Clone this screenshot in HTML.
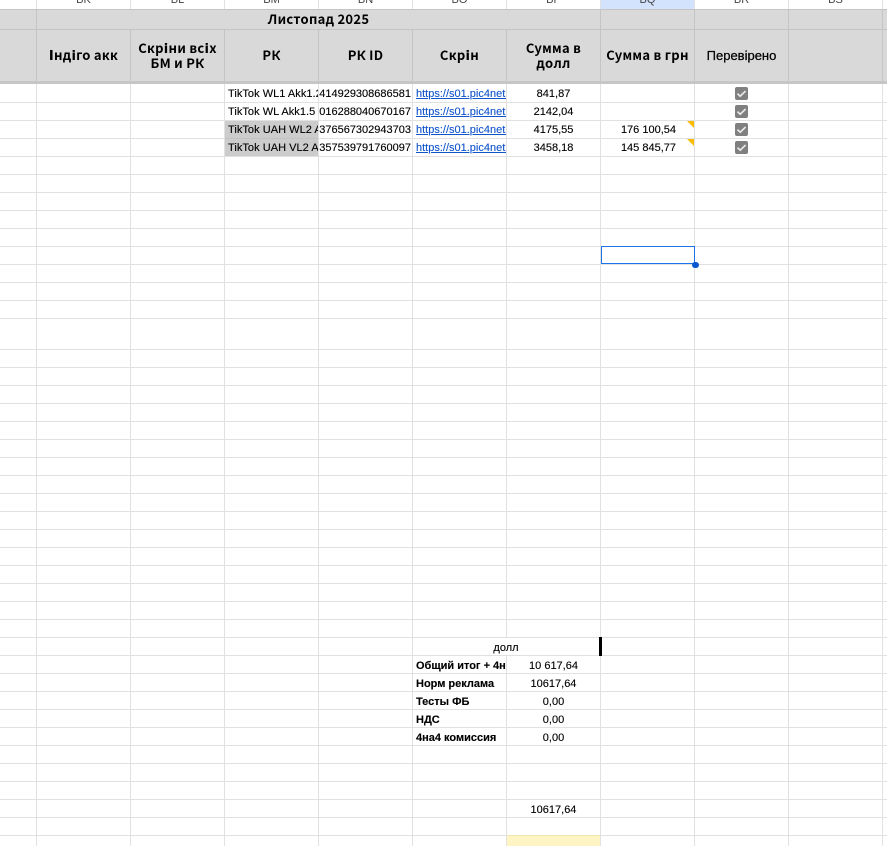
<!DOCTYPE html>
<html><head><meta charset="utf-8">
<style>
html,body{margin:0;padding:0;background:#fff}
#s{position:relative;width:887px;height:846px;overflow:hidden;background:#fff;font-family:"Liberation Sans",Arial,sans-serif;font-size:11px;color:#000}
#s div{position:absolute;box-sizing:border-box}
.v{width:1px;background:#e1e1e1;top:0;height:846px}
.hv{width:1px;background:#c4c4c4}
.hl{font-size:11px;color:#444;top:-7px;width:93px;text-align:center;line-height:14px}
.h{font-family:"Noto Sans CJK SC","DejaVu Sans",sans-serif;font-weight:700;font-size:13px;letter-spacing:.28px;line-height:15px;text-align:center;display:flex;align-items:center;justify-content:center;top:29px;height:51px;width:93px;color:#000}
.c{height:17px;line-height:20px;overflow:hidden;white-space:nowrap;-webkit-text-stroke:.12px #000}
.t{left:225px;width:93px;padding-left:3px;letter-spacing:.04px}
.id{left:319px;width:93px}
.id span{position:absolute;right:1px;top:0}
.l{left:413px;width:93px;padding-left:3px;color:#1155cc;text-decoration:underline;-webkit-text-stroke:.12px #1155cc}
.n{left:507px;width:93px;text-align:center}
.m{left:601px;width:93px;padding-right:18px;text-align:right}
.b{left:413px;width:93px;padding-left:3px;font-weight:700}
.tr{width:0;height:0;left:687px;border-top:7px solid #fbbc04;border-left:7px solid transparent}
.cb{left:735px;width:13px;height:13px;background:#808080;border-radius:2px}
.cb svg{position:absolute;left:0;top:0}
</style></head><body>
<div id="s">
<div style="left:0;top:85px;width:887px;height:234px;background:repeating-linear-gradient(to bottom,#fff 0,#fff 17px,#e1e1e1 17px,#e1e1e1 18px)"></div>
<div style="left:0;top:319px;width:887px;height:30px;background:#fff"></div>
<div style="left:0;top:349px;width:887px;height:1px;background:#e1e1e1"></div>
<div style="left:0;top:350px;width:887px;height:496px;background:repeating-linear-gradient(to bottom,#fff 0,#fff 17px,#e1e1e1 17px,#e1e1e1 18px)"></div>

<div style="left:601px;top:0;width:93px;height:9px;background:#d3e3fd"></div>
<div style="left:507px;top:836px;width:93px;height:10px;background:#fff5c4"></div>
<div style="left:507px;top:835px;width:93px;height:1px;background:#efe6b0"></div>
<div style="left:225px;top:121px;width:93px;height:35px;background:#cccccc"></div>
<div style="left:225px;top:138px;width:93px;height:1px;background:#c2c2c2"></div>

<div class="v" style="left:36px"></div><div class="v" style="left:130px"></div><div class="v" style="left:224px"></div><div class="v" style="left:318px"></div><div class="v" style="left:412px"></div><div class="v" style="left:506px"></div><div class="v" style="left:600px"></div><div class="v" style="left:694px"></div><div class="v" style="left:788px"></div><div class="v" style="left:882px"></div>

<div class="hl" style="left:37px">BK</div><div class="hl" style="left:131px">BL</div><div class="hl" style="left:225px">BM</div><div class="hl" style="left:319px">BN</div><div class="hl" style="left:413px">BO</div><div class="hl" style="left:507px">BP</div><div class="hl" style="left:601px">BQ</div><div class="hl" style="left:695px">BR</div><div class="hl" style="left:789px">BS</div>

<div style="left:0;top:9px;width:887px;height:75px;background:#d9d9d9"></div>
<div style="left:0;top:9px;width:887px;height:1px;background:#c4c4c4"></div>
<div style="left:0;top:29px;width:887px;height:1px;background:#c4c4c4"></div>
<div style="left:0;top:81px;width:887px;height:3px;background:#c6c6c6"></div>
<div class="hv" style="left:36px;top:9px;height:72px"></div>
<div class="hv" style="left:600px;top:9px;height:72px"></div>
<div class="hv" style="left:694px;top:9px;height:72px"></div>
<div class="hv" style="left:788px;top:9px;height:72px"></div>
<div class="hv" style="left:882px;top:9px;height:75px"></div>
<div class="hv" style="left:130px;top:30px;height:51px"></div>
<div class="hv" style="left:224px;top:30px;height:51px"></div>
<div class="hv" style="left:318px;top:30px;height:51px"></div>
<div class="hv" style="left:412px;top:30px;height:51px"></div>
<div class="hv" style="left:506px;top:30px;height:51px"></div>

<div class="h" style="left:37px;top:9px;width:563px;height:19px">Листопад 2025</div>
<div class="h" style="left:37px">Індіго акк</div>
<div class="h" style="left:131px">Скріни всіх<br>БМ и РК</div>
<div class="h" style="left:225px">РК</div>
<div class="h" style="left:319px">РК ID</div>
<div class="h" style="left:413px">Скрін</div>
<div class="h" style="left:507px">Сумма в<br>долл</div>
<div class="h" style="left:601px">Сумма в грн</div>
<div class="h" style="left:695px;top:30px;font-family:'Liberation Sans',sans-serif;font-weight:400;font-size:13px;letter-spacing:0;-webkit-text-stroke:.25px #000">Перевірено</div>

<div class="c t" style="top:84px">TikTok WL1 Akk1.2</div>
<div class="c t" style="top:102px">TikTok WL Akk1.5</div>
<div class="c t" style="top:120px">TikTok UAH WL2 Akk</div>
<div class="c t" style="top:138px">TikTok UAH VL2 Akk</div>

<div class="c id" style="top:84px"><span>7414929308686581</span></div>
<div class="c id" style="top:102px"><span>7016288040670167</span></div>
<div class="c id" style="top:120px"><span>7376567302943703</span></div>
<div class="c id" style="top:138px"><span>7357539791760097</span></div>

<div class="c l" style="top:84px">https://s01.pic4net.com/di</div>
<div class="c l" style="top:102px">https://s01.pic4net.com/di</div>
<div class="c l" style="top:120px">https://s01.pic4net.com/di</div>
<div class="c l" style="top:138px">https://s01.pic4net.com/di</div>

<div class="c n" style="top:84px">841,87</div>
<div class="c n" style="top:102px">2142,04</div>
<div class="c n" style="top:120px">4175,55</div>
<div class="c n" style="top:138px">3458,18</div>

<div class="c m" style="top:120px">176 100,54</div>
<div class="c m" style="top:138px">145 845,77</div>
<div class="tr" style="top:121px"></div>
<div class="tr" style="top:139px"></div>

<div class="cb" style="top:87px"><svg width="13" height="13" viewBox="0 0 13 13"><path d="M2.5 6.6L5.2 9.2L10.6 4" fill="none" stroke="#e8e8e8" stroke-width="1.7"/></svg></div>
<div class="cb" style="top:105px"><svg width="13" height="13" viewBox="0 0 13 13"><path d="M2.5 6.6L5.2 9.2L10.6 4" fill="none" stroke="#e8e8e8" stroke-width="1.7"/></svg></div>
<div class="cb" style="top:123px"><svg width="13" height="13" viewBox="0 0 13 13"><path d="M2.5 6.6L5.2 9.2L10.6 4" fill="none" stroke="#e8e8e8" stroke-width="1.7"/></svg></div>
<div class="cb" style="top:141px"><svg width="13" height="13" viewBox="0 0 13 13"><path d="M2.5 6.6L5.2 9.2L10.6 4" fill="none" stroke="#e8e8e8" stroke-width="1.7"/></svg></div>

<div style="left:601px;top:246px;width:94px;height:18px;border:1px solid #1a73e8"></div>
<div style="left:692px;top:261.5px;width:6.5px;height:6.5px;border-radius:50%;background:#0b57d0"></div>

<div class="c" style="left:413px;top:638px;width:186px;text-align:center;background:#fff">долл</div>
<div style="left:599px;top:637px;width:3px;height:19px;background:#000"></div>

<div class="c b" style="top:656px">Общий итог + 4на4</div>
<div class="c b" style="top:674px">Норм реклама</div>
<div class="c b" style="top:692px">Тесты ФБ</div>
<div class="c b" style="top:710px">НДС</div>
<div class="c b" style="top:728px">4на4 комиссия</div>
<div class="c n" style="top:656px">10 617,64</div>
<div class="c n" style="top:674px">10617,64</div>
<div class="c n" style="top:692px">0,00</div>
<div class="c n" style="top:710px">0,00</div>
<div class="c n" style="top:728px">0,00</div>
<div class="c n" style="top:800px">10617,64</div>
</div>
</body></html>
